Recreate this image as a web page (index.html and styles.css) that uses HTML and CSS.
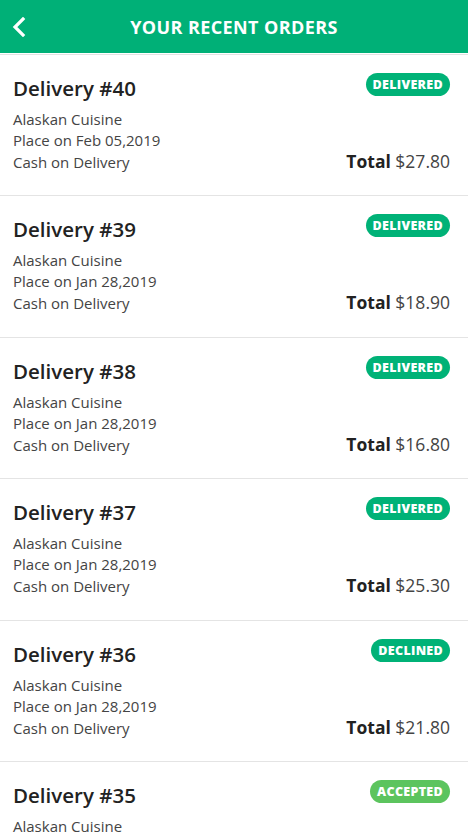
FILE: index.html
```html
<!DOCTYPE html>
<html>
<head>
<meta charset="utf-8">
<link rel="stylesheet" href="styles.css">
</head>
<body>
<header class="topbar">
  <svg class="back" width="14" height="20" viewBox="0 0 14 20"><path d="M11 2 L3 10 L11 18" fill="none" stroke="#fff" stroke-width="3.2" stroke-linecap="square"/></svg>
  <h1 class="title">YOUR RECENT ORDERS</h1>
</header>
<main class="list">
  <section class="order">
    <div class="row head"><h2 class="name">Delivery #40</h2><span class="badge">DELIVERED</span></div>
    <div class="line">Alaskan Cuisine</div>
    <div class="line">Place on Feb 05,2019</div>
    <div class="row foot"><span class="line">Cash on Delivery</span><span class="total"><b>Total</b> $27.80</span></div>
  </section>
  <section class="order">
    <div class="row head"><h2 class="name">Delivery #39</h2><span class="badge">DELIVERED</span></div>
    <div class="line">Alaskan Cuisine</div>
    <div class="line">Place on Jan 28,2019</div>
    <div class="row foot"><span class="line">Cash on Delivery</span><span class="total"><b>Total</b> $18.90</span></div>
  </section>
  <section class="order">
    <div class="row head"><h2 class="name">Delivery #38</h2><span class="badge">DELIVERED</span></div>
    <div class="line">Alaskan Cuisine</div>
    <div class="line">Place on Jan 28,2019</div>
    <div class="row foot"><span class="line">Cash on Delivery</span><span class="total"><b>Total</b> $16.80</span></div>
  </section>
  <section class="order">
    <div class="row head"><h2 class="name">Delivery #37</h2><span class="badge">DELIVERED</span></div>
    <div class="line">Alaskan Cuisine</div>
    <div class="line">Place on Jan 28,2019</div>
    <div class="row foot"><span class="line">Cash on Delivery</span><span class="total"><b>Total</b> $25.30</span></div>
  </section>
  <section class="order">
    <div class="row head"><h2 class="name">Delivery #36</h2><span class="badge">DECLINED</span></div>
    <div class="line">Alaskan Cuisine</div>
    <div class="line">Place on Jan 28,2019</div>
    <div class="row foot"><span class="line">Cash on Delivery</span><span class="total"><b>Total</b> $21.80</span></div>
  </section>
  <section class="order">
    <div class="row head"><h2 class="name">Delivery #35</h2><span class="badge accepted">ACCEPTED</span></div>
    <div class="line">Alaskan Cuisine</div>
  </section>
</main>
</body>
</html>
```
FILE: styles.css
```css
* { box-sizing: border-box; }
html, body { margin: 0; padding: 0; }
body {
  width: 468px;
  height: 833px;
  overflow: hidden;
  background: #fff;
  font-family: "Open Sans", "Noto Sans", sans-serif;
  color: #444;
}
.topbar {
  height: 54px;
  background: #00b077;
  border-bottom: 1px solid #fff;
  display: flex;
  align-items: center;
  justify-content: center;
  position: relative;
}
.back {
  position: absolute;
  left: 12px;
  top: 17px;
}
.title {
  margin: 0;
  color: #fff;
  font-size: 18px;
  font-weight: 700;
  letter-spacing: 0.4px;
  line-height: 1;
}
.list {
  border-top: 1px solid #e2e2e2;
}
.order {
  height: 141.4px;
  padding: 19px 18px 0 13px;
  border-bottom: 1px solid #e4e4e4;
}
.row {
  display: flex;
  justify-content: space-between;
}
.head {
  align-items: center;
  margin-bottom: 7px;
}
.name {
  margin: 0;
  font-size: 20.5px;
  font-weight: 600;
  color: #222;
  line-height: 28px;
}
.badge {
  background: #00b277;
  color: #fff;
  font-size: 12.5px;
  font-weight: 800;
  letter-spacing: 0.3px;
  height: 23px;
  line-height: 23px;
  padding: 0 7px;
  border-radius: 12px;
  margin-top: -7px;
}
.badge.accepted { background: #5cc45e; }
.line {
  font-size: 15px;
  line-height: 21px;
  color: #444;
}
.foot {
  align-items: baseline;
  height: 21px;
}
.total {
  font-size: 17.5px;
  line-height: 21px;
  color: #444;
}
.total b {
  color: #222;
  font-weight: 700;
}
```
